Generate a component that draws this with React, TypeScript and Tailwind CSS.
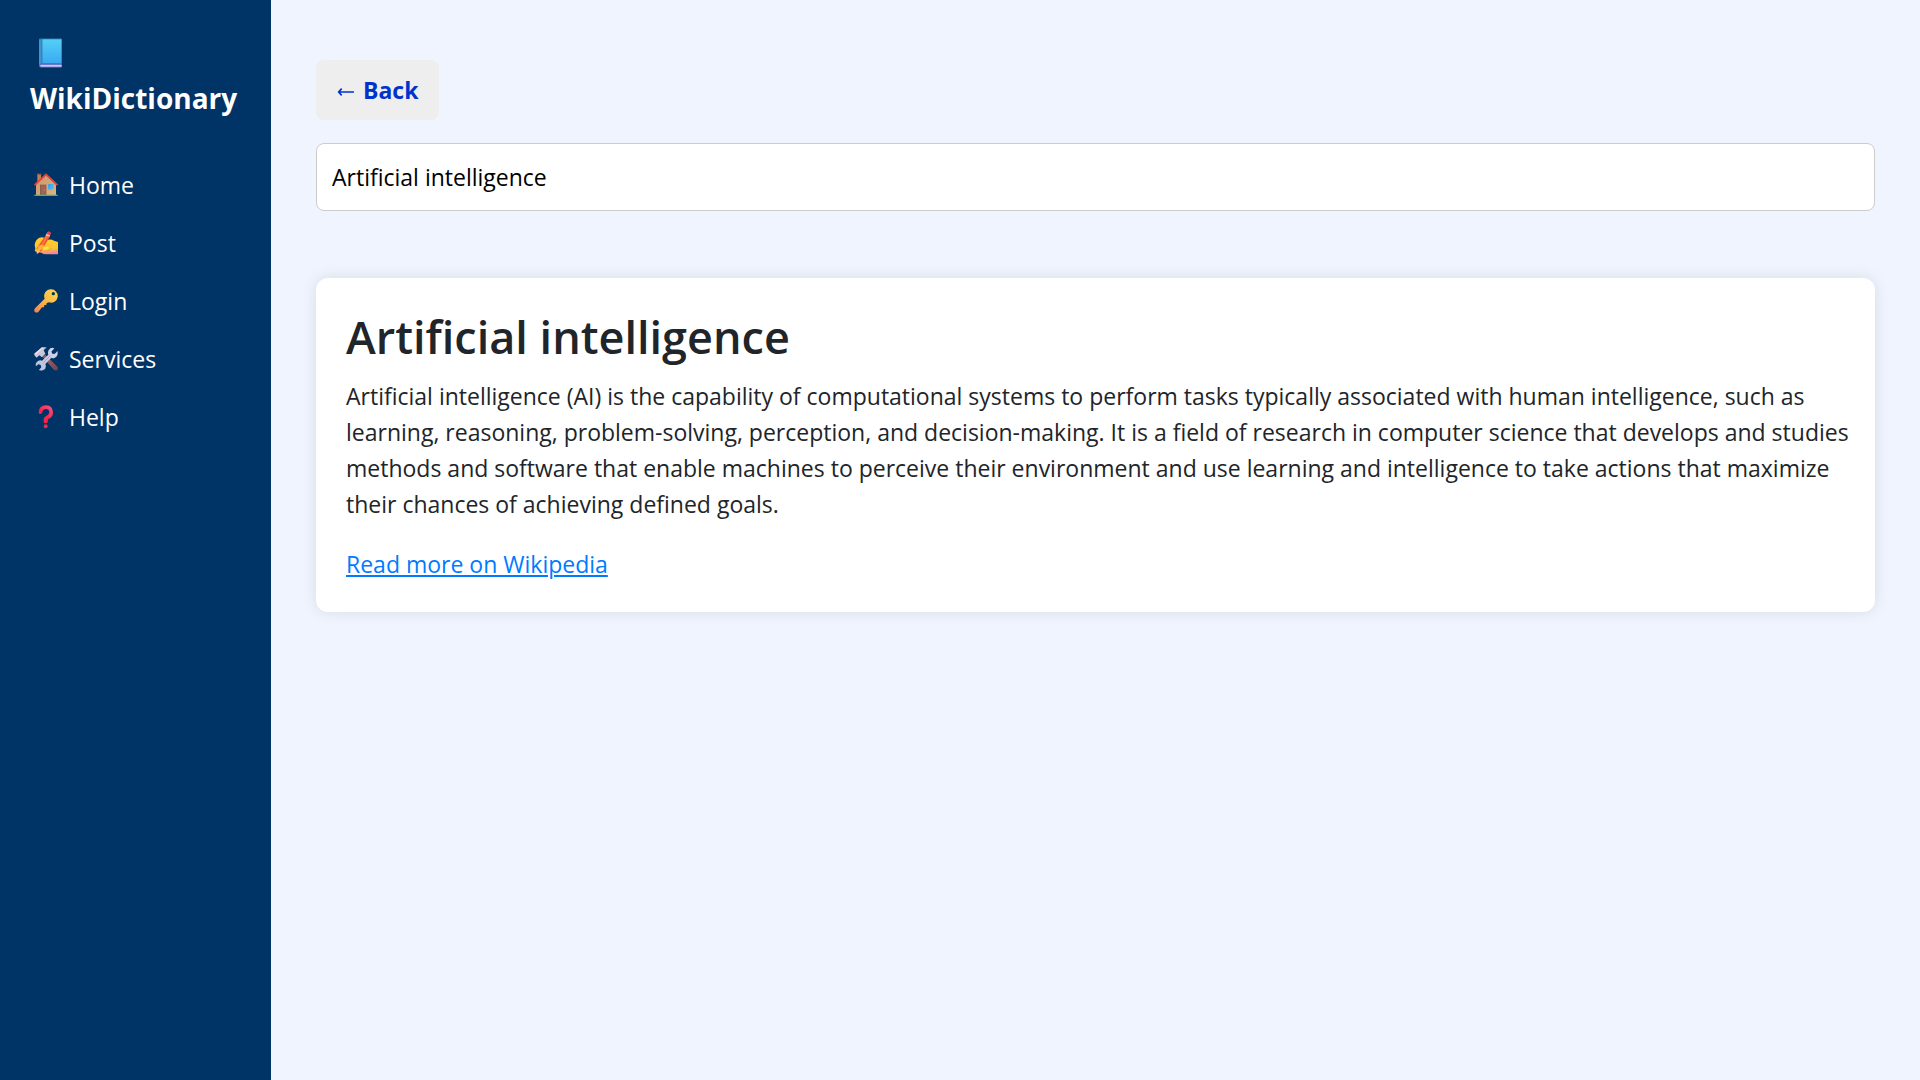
import { useState, type ReactNode } from "react";

function BookIcon() {
  return (
    <svg viewBox="0 0 70 90" className="ml-[9px] h-[30px] w-[23px]" aria-hidden="true">
      <defs>
        <linearGradient id="cover" x1="0" y1="0" x2="0" y2="1">
          <stop offset="0" stopColor="#54d0f6" />
          <stop offset="1" stopColor="#3aa9f2" />
        </linearGradient>
      </defs>
      <path d="M4 0H69V4H0Q0 0 4 0Z" fill="#1d6590" />
      <path d="M0 3H10V78L3 88Q0 86 0 82Z" fill="#3f93cb" />
      <path d="M7 3H10V77H7Z" fill="#3480b4" />
      <path d="M10 3H69V78H10Z" fill="url(#cover)" />
      <path d="M4 77H69V90H6Q1 90 1 84Q1 78 4 77Z" fill="#3f62c8" />
      <path d="M4 81H69V87H5Q3 84 4 81Z" fill="#d5c3ea" />
    </svg>
  );
}

function HomeIcon() {
  return (
    <>
      <defs>
        <linearGradient id="wall" x1="0" y1="0" x2="1" y2="1">
          <stop offset="0" stopColor="#c99468" />
          <stop offset="1" stopColor="#e3b287" />
        </linearGradient>
        <linearGradient id="pane" x1="0" y1="0" x2="1" y2="1">
          <stop offset="0" stopColor="#2f9fe8" />
          <stop offset="1" stopColor="#56c4f4" />
        </linearGradient>
      </defs>
      <path d="M10 4H21V32H10Z" fill="#b98355" />
      <path d="M9 2H22V6H9Z" fill="#8f5d4c" />
      <path d="M6 35L36 6L66 35V66H6Z" fill="url(#wall)" />
      <path d="M18 35H37V66H18Z" fill="#87574f" />
      <path d="M20 37H35V66H20Z" fill="#9a6657" />
      <circle cx="32" cy="51" r="1.5" fill="#e8b070" />
      <rect x="42" y="33" width="17" height="17" rx="3" fill="url(#pane)" />
      <path d="M3 35L36 4L69 35" fill="none" stroke="#e8453a" strokeWidth="5" strokeLinecap="round" strokeLinejoin="round" />
      <path d="M1 65H71V69H1Z" fill="#3fb871" />
    </>
  );
}

function PostIcon() {
  return (
    <>
      <defs>
        <linearGradient id="hand" x1="0" y1="0" x2="0.15" y2="1">
          <stop offset="0" stopColor="#ffce2e" />
          <stop offset="0.75" stopColor="#fbc52f" />
          <stop offset="1" stopColor="#f08a9a" />
        </linearGradient>
      </defs>
      <path d="M2 42Q4 26 16 20Q26 16 32 22L34 28Q50 22 60 29L72 33V70H36Q28 70 22 65L6 62Q0 60 4 54Z" fill="url(#hand)" />
      <path d="M40 3Q46 0 50 6L47 18L22 60L10 69L8 52L34 14Z" fill="#f0562f" />
      <path d="M42 6L46 8L20 55L15 53Z" fill="#ff7a43" />
      <path d="M39 5Q44 -2 51 6L48 13L37 9Z" fill="#f03c48" />
      <path d="M37 9L48 13L46 17L35 13Z" fill="#c8cbe0" />
      <path d="M9 55L20 60L8 69Z" fill="#f4b9a0" />
      <path d="M14 45Q22 38 29 43Q33 47 28 52L18 58Q12 60 10 54Z" fill="#ffb62b" />
      <path d="M27 49Q39 45 46 52Q39 58 29 58Z" fill="#ffdc4a" />
      <path d="M26 60Q42 63 53 52" fill="none" stroke="#f0a52c" strokeWidth="3" />
    </>
  );
}

function LoginIcon() {
  return (
    <>
      <defs>
        <linearGradient id="key" x1="1" y1="0" x2="0" y2="1">
          <stop offset="0" stopColor="#ffd84a" />
          <stop offset="0.5" stopColor="#fdb944" />
          <stop offset="1" stopColor="#f5804f" />
        </linearGradient>
      </defs>
      <path
        fillRule="evenodd"
        d="M51 1A20 20 0 1 1 45 40L38 42L37 48L31 48L30 55L24 55L13 69Q7 73 2 68Q-1 63 3 58L32 29A20 20 0 0 1 51 1ZM58 9A5 5 0 1 0 58 19A5 5 0 0 0 58 9Z"
        fill="url(#key)"
      />
    </>
  );
}

function ServicesIcon() {
  return (
    <>
      <defs>
        <linearGradient id="handle" x1="0" y1="0" x2="1" y2="1">
          <stop offset="0" stopColor="#a06a6c" />
          <stop offset="1" stopColor="#744452" />
        </linearGradient>
        <linearGradient id="steel" x1="0" y1="1" x2="1" y2="0">
          <stop offset="0" stopColor="#b5bedd" />
          <stop offset="1" stopColor="#d9d6ea" />
        </linearGradient>
      </defs>
      <path d="M26 30L34 23L71 60V70H61Z" fill="url(#handle)" />
      <path d="M1 20L24 1H38L29 10L34 20L24 31L16 25L8 32L1 25Z" fill="#cdc5d8" />
      <path d="M1 20L24 1L28 3L5 24Z" fill="#e3dfea" />
      <path
        d="M61 4L52 14L56 21L63 20L70 12Q74 27 63 32Q57 35 52 32L34 51Q39 64 28 69Q21 72 15 69L22 61L20 54L13 52L6 58Q2 47 13 41Q19 38 24 41L43 23Q39 11 49 4Q55 1 61 4Z"
        fill="url(#steel)"
      />
      <path d="M27 48L49 26" stroke="#aaa9c8" strokeWidth="3" />
    </>
  );
}

function HelpIcon() {
  return (
    <>
      <defs>
        <linearGradient id="question" x1="1" y1="0" x2="0.2" y2="1">
          <stop offset="0" stopColor="#f9568c" />
          <stop offset="0.6" stopColor="#f0294d" />
          <stop offset="1" stopColor="#e9274a" />
        </linearGradient>
      </defs>
      <path
        d="M14 22Q14 2 36 1Q57 2 57 23Q57 36 43 42Q41 43 41 51Q40 55 35 55Q29 55 29 50V41Q30 36 36 33Q46 29 46 22Q45 12 36 12Q27 12 25 22Q24 27 19 27Q14 27 14 22Z"
        fill="url(#question)"
      />
      <circle cx="35" cy="64" r="6" fill="#ee2b50" />
    </>
  );
}

const links: { label: string; icon: ReactNode }[] = [
  { label: "Home", icon: <HomeIcon /> },
  { label: "Post", icon: <PostIcon /> },
  { label: "Login", icon: <LoginIcon /> },
  { label: "Services", icon: <ServicesIcon /> },
  { label: "Help", icon: <HelpIcon /> },
];

export default function App() {
  const [query, setQuery] = useState("Artificial intelligence");
  return (
    <div className="flex min-h-screen bg-[#f0f4ff] font-['Open_Sans','Noto_Sans',sans-serif] text-[23px] text-[#212529]">
      <aside className="w-[271px] shrink-0 bg-[#003366] px-[30px] pt-[38px] text-white">
        <BookIcon />
        <p className="mt-2 text-[28px] leading-[45px] font-bold">WikiDictionary</p>
        <nav aria-label="Main" className="mt-[46px]">
          <ul className="flex flex-col gap-[22px]">
            {links.map((link) => (
              <li key={link.label}>
                <a href="#" className="flex items-center pl-[4px] leading-[36px]">
                  <svg viewBox="0 0 72 72" className="mr-[11px] h-6 w-6 shrink-0" aria-hidden="true">
                    {link.icon}
                  </svg>
                  {link.label}
                </a>
              </li>
            ))}
          </ul>
        </nav>
      </aside>

      <main className="min-w-0 flex-1 px-[45px] pt-[60px]">
        <button
          type="button"
          className="flex h-[60px] items-center gap-2 rounded-lg bg-[#eeeeee] px-[21px] font-bold text-[#0033cc]"
        >
          <svg viewBox="0 0 54 30" className="mt-1 h-[10px] w-[18px]" aria-hidden="true">
            <path d="M4 15H51M14 5L5 15L14 25" fill="none" stroke="currentColor" strokeWidth="5" />
          </svg>
          Back
        </button>

        <input
          type="text"
          aria-label="Search"
          value={query}
          onChange={(event) => setQuery(event.target.value)}
          className="mt-[23px] block h-[68px] w-full rounded-lg border border-[#cccccc] bg-white px-[15px] text-black outline-none"
        />

        <article className="mt-[67px] rounded-xl bg-white py-[30px] pr-5 pl-[30px] shadow-[0_0_15px_rgba(0,0,0,0.1)]">
          <h1 className="mb-3 text-[45px] leading-[58px] font-semibold">Artificial intelligence</h1>
          <p className="mb-6 leading-[36px]">
            Artificial intelligence (AI) is the capability of computational systems to perform tasks typically
            associated with human intelligence, such as learning, reasoning, problem-solving, perception, and
            decision-making. It is a field of research in computer science that develops and studies methods and
            software that enable machines to perceive their environment and use learning and intelligence to take
            actions that maximize their chances of achieving defined goals.
          </p>
          <a href="#" className="block w-fit leading-[36px] text-[#007bff] underline">
            Read more on Wikipedia
          </a>
        </article>
      </main>
    </div>
  );
}
